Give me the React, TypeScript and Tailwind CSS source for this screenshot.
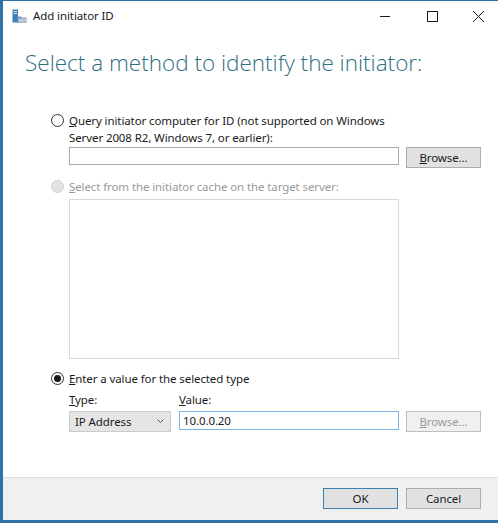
import React from "react";

const font = { fontFamily: '"Noto Sans", "Segoe UI", sans-serif' };

function Radio({ checked, disabled }: { checked?: boolean; disabled?: boolean }) {
  return (
    <span
      className={`flex h-[13px] w-[13px] shrink-0 items-center justify-center rounded-full border ${
        disabled ? "border-[#d0d0d0] bg-[#e3e3e3]" : "border-[#333333] bg-white"
      }`}
    >
      {checked && <span className="h-[7px] w-[7px] rounded-full bg-[#1a1a1a]" />}
    </span>
  );
}

function Button({
  children,
  disabled,
  primary,
}: {
  children: React.ReactNode;
  disabled?: boolean;
  primary?: boolean;
}) {
  return (
    <div
      className={`flex h-[21px] w-[75px] items-center justify-center border ${
        disabled
          ? "border-[#bfbfbf] bg-[#f0f0f0] text-[#9a9a9a]"
          : primary
          ? "border-[#3c7fb1] bg-[#e1e1e1] text-[#1a1a1a]"
          : "border-[#adadad] bg-[#e1e1e1] text-[#1a1a1a]"
      }`}
    >
      {children}
    </div>
  );
}

export default function App() {
  return (
    <div
      style={font}
      className="flex h-[523px] w-[498px] flex-col border-b-[3px] border-l-[3px] border-t border-[#2f73a6] bg-white text-[11.5px] tracking-[-0.1px] text-[#1a1a1a]"
    >
      {/* title bar */}
      <div className="flex h-[30px] shrink-0 items-center">
        <svg width="15" height="15" viewBox="0 0 15 15" className="ml-[9px]">
          <rect x="0.5" y="0.5" width="5.5" height="13" fill="#3f7fb8" />
          <rect x="1.5" y="2" width="3.5" height="1" fill="#cfe2f3" />
          <rect x="1.5" y="4" width="3.5" height="1" fill="#cfe2f3" />
          <path d="M5.5 7.5 h3.5 l1 1 h4.5 v5.5 h-9 z" fill="#7f98ae" />
          <rect x="6.5" y="9.5" width="7.5" height="4" fill="#b9cad9" />
        </svg>
        <span className="ml-[6px]">Add initiator ID</span>
        <div className="ml-auto flex items-center">
          <svg width="46" height="30" viewBox="0 0 46 30">
            <line x1="20" y1="15.5" x2="30" y2="15.5" stroke="#1a1a1a" strokeWidth="1" />
          </svg>
          <svg width="46" height="30" viewBox="0 0 46 30">
            <rect x="21.5" y="10.5" width="10" height="10" fill="none" stroke="#1a1a1a" strokeWidth="1" />
          </svg>
          <svg width="46" height="30" viewBox="0 0 46 30">
            <path d="M21 10 L32 21 M32 10 L21 21" stroke="#1a1a1a" strokeWidth="1" />
          </svg>
        </div>
      </div>

      {/* body */}
      <div className="flex-1 pl-[22px] pr-[16px]">
        <h1
          style={{ fontFamily: '"Segoe UI Light", "Open Sans", "Noto Sans", sans-serif' }}
          className="mt-[16px] text-[22.5px] font-light leading-[32px] tracking-normal text-[#2f6f82]"
        >
          Select a method to identify the initiator:
        </h1>

        <div className="ml-[26px] mt-[33px]">
          <div className="flex">
            <div className="flex h-[17px] items-center">
              <Radio />
            </div>
            <div className="ml-[5px] leading-[17px]">
              <span className="underline">Q</span>uery initiator computer for ID (not supported on Windows
              <br />
              Server 2008 R2, Windows 7, or earlier):
            </div>
          </div>
          <div className="ml-[18px] mt-[1px] flex items-start gap-[7px]">
            <div className="h-[18px] w-[330px] border border-[#ababab] bg-white" />
            <Button>
              <span className="underline">B</span>rowse...
            </Button>
          </div>

          <div className="mt-[10px] flex items-center leading-[17px] text-[#9a9a9a]">
            <Radio disabled />
            <span className="ml-[5px]">
              <span className="underline">S</span>elect from the initiator cache on the target server:
            </span>
          </div>
          <div className="ml-[18px] mt-[4px] h-[160px] w-[330px] border border-[#dadada] bg-white" />

          <div className="mt-[11px] flex items-center leading-[17px]">
            <Radio checked />
            <span className="ml-[5px]">
              <span className="underline">E</span>nter a value for the selected type
            </span>
          </div>
          <div className="ml-[18px] mt-[4px] flex">
            <div className="w-[110px]">
              <div className="leading-[17px]">
                <span className="underline">T</span>ype:
              </div>
              <div className="mt-[3px] flex h-[21px] w-[102px] items-center justify-between border border-[#cccccc] bg-[#e5e5e5] pl-[5px] pr-[6px]">
                <span>IP Address</span>
                <svg width="7" height="5" viewBox="0 0 7 5">
                  <path d="M0.5 0.5 L3.5 3.5 L6.5 0.5" fill="none" stroke="#555" strokeWidth="1" />
                </svg>
              </div>
            </div>
            <div>
              <div className="leading-[17px]">
                <span className="underline">V</span>alue:
              </div>
              <div className="mt-[3px] flex items-start gap-[7px]">
                <div className="flex h-[19px] w-[220px] items-center border border-[#7eb4ea] bg-white pl-[3px]">
                  10.0.0.20
                </div>
                <Button disabled>
                  <span className="underline">B</span>rowse...
                </Button>
              </div>
            </div>
          </div>
        </div>
      </div>

      {/* footer */}
      <div className="flex h-[43px] shrink-0 items-start justify-end gap-[8px] border-t border-[#dfdfdf] bg-[#f0f0f0] pr-[17px] pt-[10px]">
        <Button primary>OK</Button>
        <Button>Cancel</Button>
      </div>
    </div>
  );
}
